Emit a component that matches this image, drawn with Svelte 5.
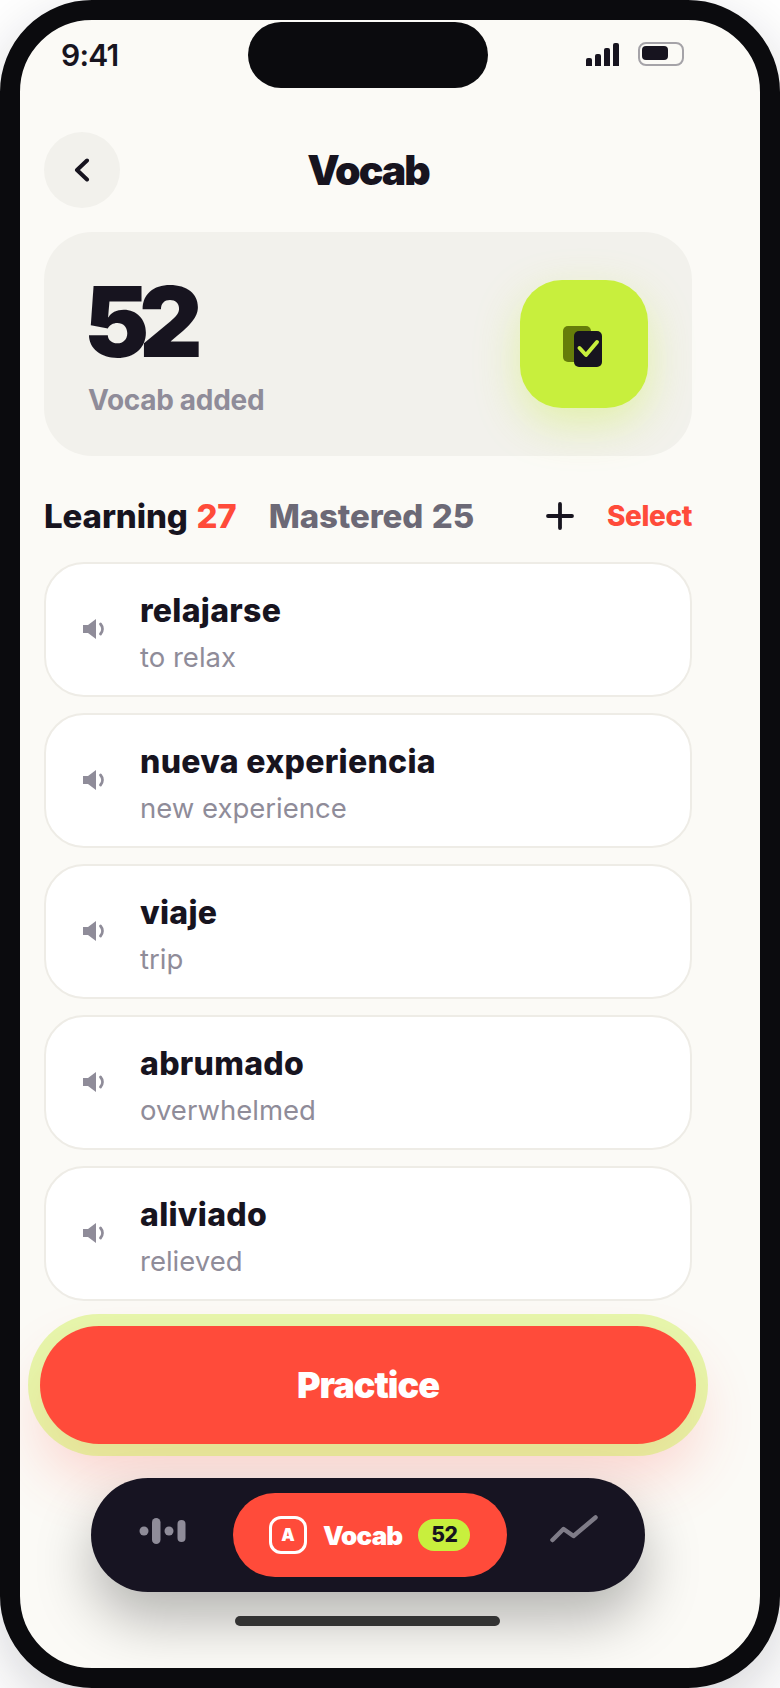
<script>
  const words = [
    { w: 'relajarse', t: 'to relax' },
    { w: 'nueva experiencia', t: 'new experience' },
    { w: 'viaje', t: 'trip' },
    { w: 'abrumado', t: 'overwhelmed' },
    { w: 'aliviado', t: 'relieved' }
  ];
</script>

<div class="phone">
  <div class="screen">
    <div class="island"></div>
    <div class="status">
      <span class="time">9:41</span>
      <div class="status-icons">
        <div class="signal"><i class="b1"></i><i class="b2"></i><i class="b3"></i><i class="b4"></i></div>
        <div class="battery"><i></i></div>
      </div>
    </div>

    <header class="header">
      <button class="back" aria-label="Back">
        <svg width="18" height="24" viewBox="0 0 18 24" fill="none"><path d="M14 2.500 4 12l10 9.500" stroke="#17141f" stroke-width="4" stroke-linecap="round" stroke-linejoin="round"/></svg>
      </button>
      <h1>Vocab</h1>
    </header>

    <section class="summary">
      <div class="summary-text">
        <div class="count">52</div>
        <div class="label">Vocab added</div>
      </div>
      <div class="badge-icon">
        <svg width="40" height="42" viewBox="0 0 40 42" fill="none">
          <rect x="0" y="0" width="28" height="36" rx="5" fill="#667d0a"/>
          <rect x="11" y="5" width="28" height="36" rx="5" fill="#17141f"/>
          <path d="M16.500 22l6.500 7L34 16" stroke="#c8ef3d" stroke-width="4" stroke-linecap="round" stroke-linejoin="round"/>
        </svg>
      </div>
    </section>

    <div class="tabs">
      <span class="tab active">Learning <em>27</em></span>
      <span class="tab muted">Mastered 25</span>
      <svg class="plus" width="28" height="28" viewBox="0 0 28 28" fill="none"><path d="M14 2v24M2 14h24" stroke="#17141f" stroke-width="3.800" stroke-linecap="round"/></svg>
      <span class="select">Select</span>
    </div>

    <ul class="list">
      {#each words as item}
        <li class="row">
          <svg class="speaker" width="23" height="20" viewBox="0 0 23 20" fill="none">
            <path d="M0 6h5l8-6v20l-8-6H0z" fill="#8f8c99"/>
            <path d="M17.500 5c2.600 3 2.600 7 0 10" stroke="#8f8c99" stroke-width="2.800" stroke-linecap="round"/>
          </svg>
          <div class="row-text">
            <div class="word">{item.w}</div>
            <div class="trans">{item.t}</div>
          </div>
        </li>
      {/each}
    </ul>

    <button class="practice">Practice</button>

    <nav class="nav">
      <svg class="wave" width="48" height="28" viewBox="0 0 48 28" fill="#8f8c99">
        <circle cx="5" cy="13" r="4.500"/>
        <rect x="13" y="0" width="8.500" height="26" rx="4.250"/>
        <circle cx="30" cy="13" r="4.500"/>
        <rect x="38.500" y="2" width="8" height="22" rx="4"/>
      </svg>
      <div class="pill">
        <span class="a-icon">A</span>
        <span class="pill-label">Vocab</span>
        <span class="pill-count">52</span>
      </div>
      <svg class="trend" width="48" height="28" viewBox="0 0 48 28" fill="none">
        <path d="M2.500 25 13.500 14l10 7L45.500 2.500" stroke="#7f7c88" stroke-width="4.500" stroke-linecap="round" stroke-linejoin="round"/>
      </svg>
    </nav>

    <div class="home"></div>
  </div>
</div>

<style>
  :global(body) {
    margin: 0;
    background: #fff;
  }
  * {
    box-sizing: border-box;
  }
  .phone {
    width: 780px;
    height: 1688px;
    border: 20px solid #0b0b0e;
    border-radius: 92px;
    background: #fbfaf6;
    box-shadow: 0 20px 60px rgba(20, 20, 40, 0.18);
    overflow: hidden;
    font-family: Inter, "Noto Sans", sans-serif;
    color: #17141f;
  }
  .screen {
    position: relative;
    width: 696px;
    padding: 0 24px;
  }
  .island {
    position: absolute;
    left: 228px;
    top: 2px;
    width: 240px;
    height: 66px;
    border-radius: 33px;
    background: #0b0b0e;
  }
  .status {
    height: 112px;
    display: flex;
    justify-content: space-between;
    align-items: flex-start;
    padding: 17px 8px 0 17px;
  }
  .time {
    font-size: 30px;
    font-weight: 600;
    line-height: 36px;
    letter-spacing: -0.800px;
  }
  .status-icons {
    display: flex;
    align-items: flex-end;
    gap: 19px;
    padding-top: 5px;
  }
  .signal {
    display: flex;
    align-items: flex-end;
    gap: 3px;
    height: 23px;
  }
  .signal i {
    width: 6px;
    background: #17141f;
    border-radius: 2px 2px 0 0;
  }
  .b1 { height: 8px; }
  .b2 { height: 12px; }
  .b3 { height: 18px; }
  .b4 { height: 23px; }
  .battery {
    width: 46px;
    height: 24px;
    border: 2px solid #a5a3a8;
    border-radius: 8px;
    padding: 2px;
  }
  .battery i {
    display: block;
    width: 26px;
    height: 14px;
    background: #17141f;
    border-radius: 4px;
  }
  .header {
    position: relative;
    height: 76px;
    display: flex;
    align-items: center;
    justify-content: center;
  }
  .back {
    position: absolute;
    left: 0;
    top: 0;
    width: 76px;
    height: 76px;
    border: 0;
    border-radius: 50%;
    background: #f2f1ec;
    display: flex;
    align-items: center;
    justify-content: center;
    padding: 0;
  }
  h1 {
    margin: 0;
    font-size: 41px;
    font-weight: 900;
    line-height: 76px;
    letter-spacing: -2px;
  }
  .summary {
    margin-top: 24px;
    height: 224px;
    border-radius: 48px;
    background: #f2f1ec;
    padding: 48px 44px 0 44px;
    display: flex;
    justify-content: space-between;
    align-items: flex-start;
  }
  .count {
    font-size: 98px;
    font-weight: 900;
    line-height: 90px;
    letter-spacing: -10px;
    margin: -3px 0 0 -4px;
  }
  .label {
    font-size: 28px;
    font-weight: 700;
    color: #8f8c99;
    line-height: 34px;
    margin-top: 16px;
    letter-spacing: -0.300px;
  }
  .badge-icon {
    width: 128px;
    height: 128px;
    border-radius: 42px;
    background: #c8ef3d;
    box-shadow: 0 16px 44px rgba(200, 239, 61, 0.38);
    display: flex;
    align-items: center;
    justify-content: center;
    padding: 6px 2px 0 0;
  }
  .tabs {
    margin-top: 38px;
    height: 42px;
    padding-top: 2px;
    display: flex;
    align-items: center;
  }
  .tab {
    font-size: 33px;
    font-weight: 800;
    white-space: nowrap;
    letter-spacing: -0.100px;
    word-spacing: 1.500px;
  }
  .tab em {
    font-style: normal;
    color: #ff4b3a;
  }
  .muted {
    color: #6c6976;
    margin-left: 32px;
  }
  .plus {
    margin-left: auto;
  }
  .select {
    margin-left: 33px;
    font-size: 28px;
    font-weight: 800;
    color: #ff4b3a;
    letter-spacing: -0.400px;
  }
  .list {
    list-style: none;
    margin: 26px 0 0;
    padding: 0;
    display: flex;
    flex-direction: column;
    gap: 16.500px;
  }
  .row {
    height: 134.500px;
    background: #fff;
    border: 2px solid #eeece6;
    border-radius: 40px;
    display: flex;
    align-items: center;
    padding-left: 37px;
  }
  .speaker {
    flex: none;
  }
  .row-text {
    margin-left: 34px;
    padding-top: 7px;
  }
  .word {
    font-size: 32px;
    font-weight: 800;
    line-height: 42px;
    white-space: nowrap;
    letter-spacing: 0.300px;
  }
  .trans {
    font-size: 27.500px;
    font-weight: 400;
    color: #8f8c99;
    line-height: 36px;
    margin-top: 7px;
  }
  .practice {
    display: block;
    width: 656px;
    height: 118px;
    margin: 25px -4px 0;
    border: 0;
    border-radius: 59px;
    background: #ff4b3a;
    box-shadow: 0 0 0 12px rgba(200, 239, 61, 0.4), 0 32px 60px rgba(255, 75, 58, 0.22);
    color: #fff;
    font-family: inherit;
    font-size: 36px;
    font-weight: 900;
    letter-spacing: -1px;
  }
  .nav {
    width: 554px;
    height: 114px;
    margin: 34px 0 0 47px;
    border-radius: 57px;
    background: #171422;
    box-shadow: 0 28px 56px rgba(0, 0, 0, 0.28);
    display: flex;
    align-items: center;
    padding: 0 48px;
    position: relative;
  }
  .wave {
    flex: none;
    margin-top: -6px;
  }
  .pill {
    width: 274px;
    height: 84px;
    margin-left: 46px;
    border-radius: 42px;
    background: #ff4b3a;
    display: flex;
    align-items: center;
    padding-left: 36px;
    flex: none;
  }
  .a-icon {
    width: 38px;
    height: 38px;
    border: 3px solid #fff;
    border-radius: 12px;
    color: #fff;
    font-size: 17px;
    font-weight: 900;
    display: flex;
    align-items: center;
    justify-content: center;
  }
  .pill-label {
    margin-left: 16px;
    color: #fff;
    font-size: 26px;
    font-weight: 900;
    letter-spacing: -0.800px;
    padding-top: 2px;
  }
  .pill-count {
    margin-left: 16px;
    width: 52px;
    height: 32px;
    border-radius: 16px;
    background: #c8ef3d;
    color: #17141f;
    font-size: 21px;
    font-weight: 800;
    display: flex;
    align-items: center;
    justify-content: center;
    letter-spacing: -0.500px;
  }
  .trend {
    flex: none;
    margin-left: 43px;
    margin-top: -12px;
  }
  .home {
    width: 265px;
    height: 10px;
    margin: 24px 0 0 191px;
    border-radius: 5px;
    background: #333;
    position: relative;
  }
</style>
